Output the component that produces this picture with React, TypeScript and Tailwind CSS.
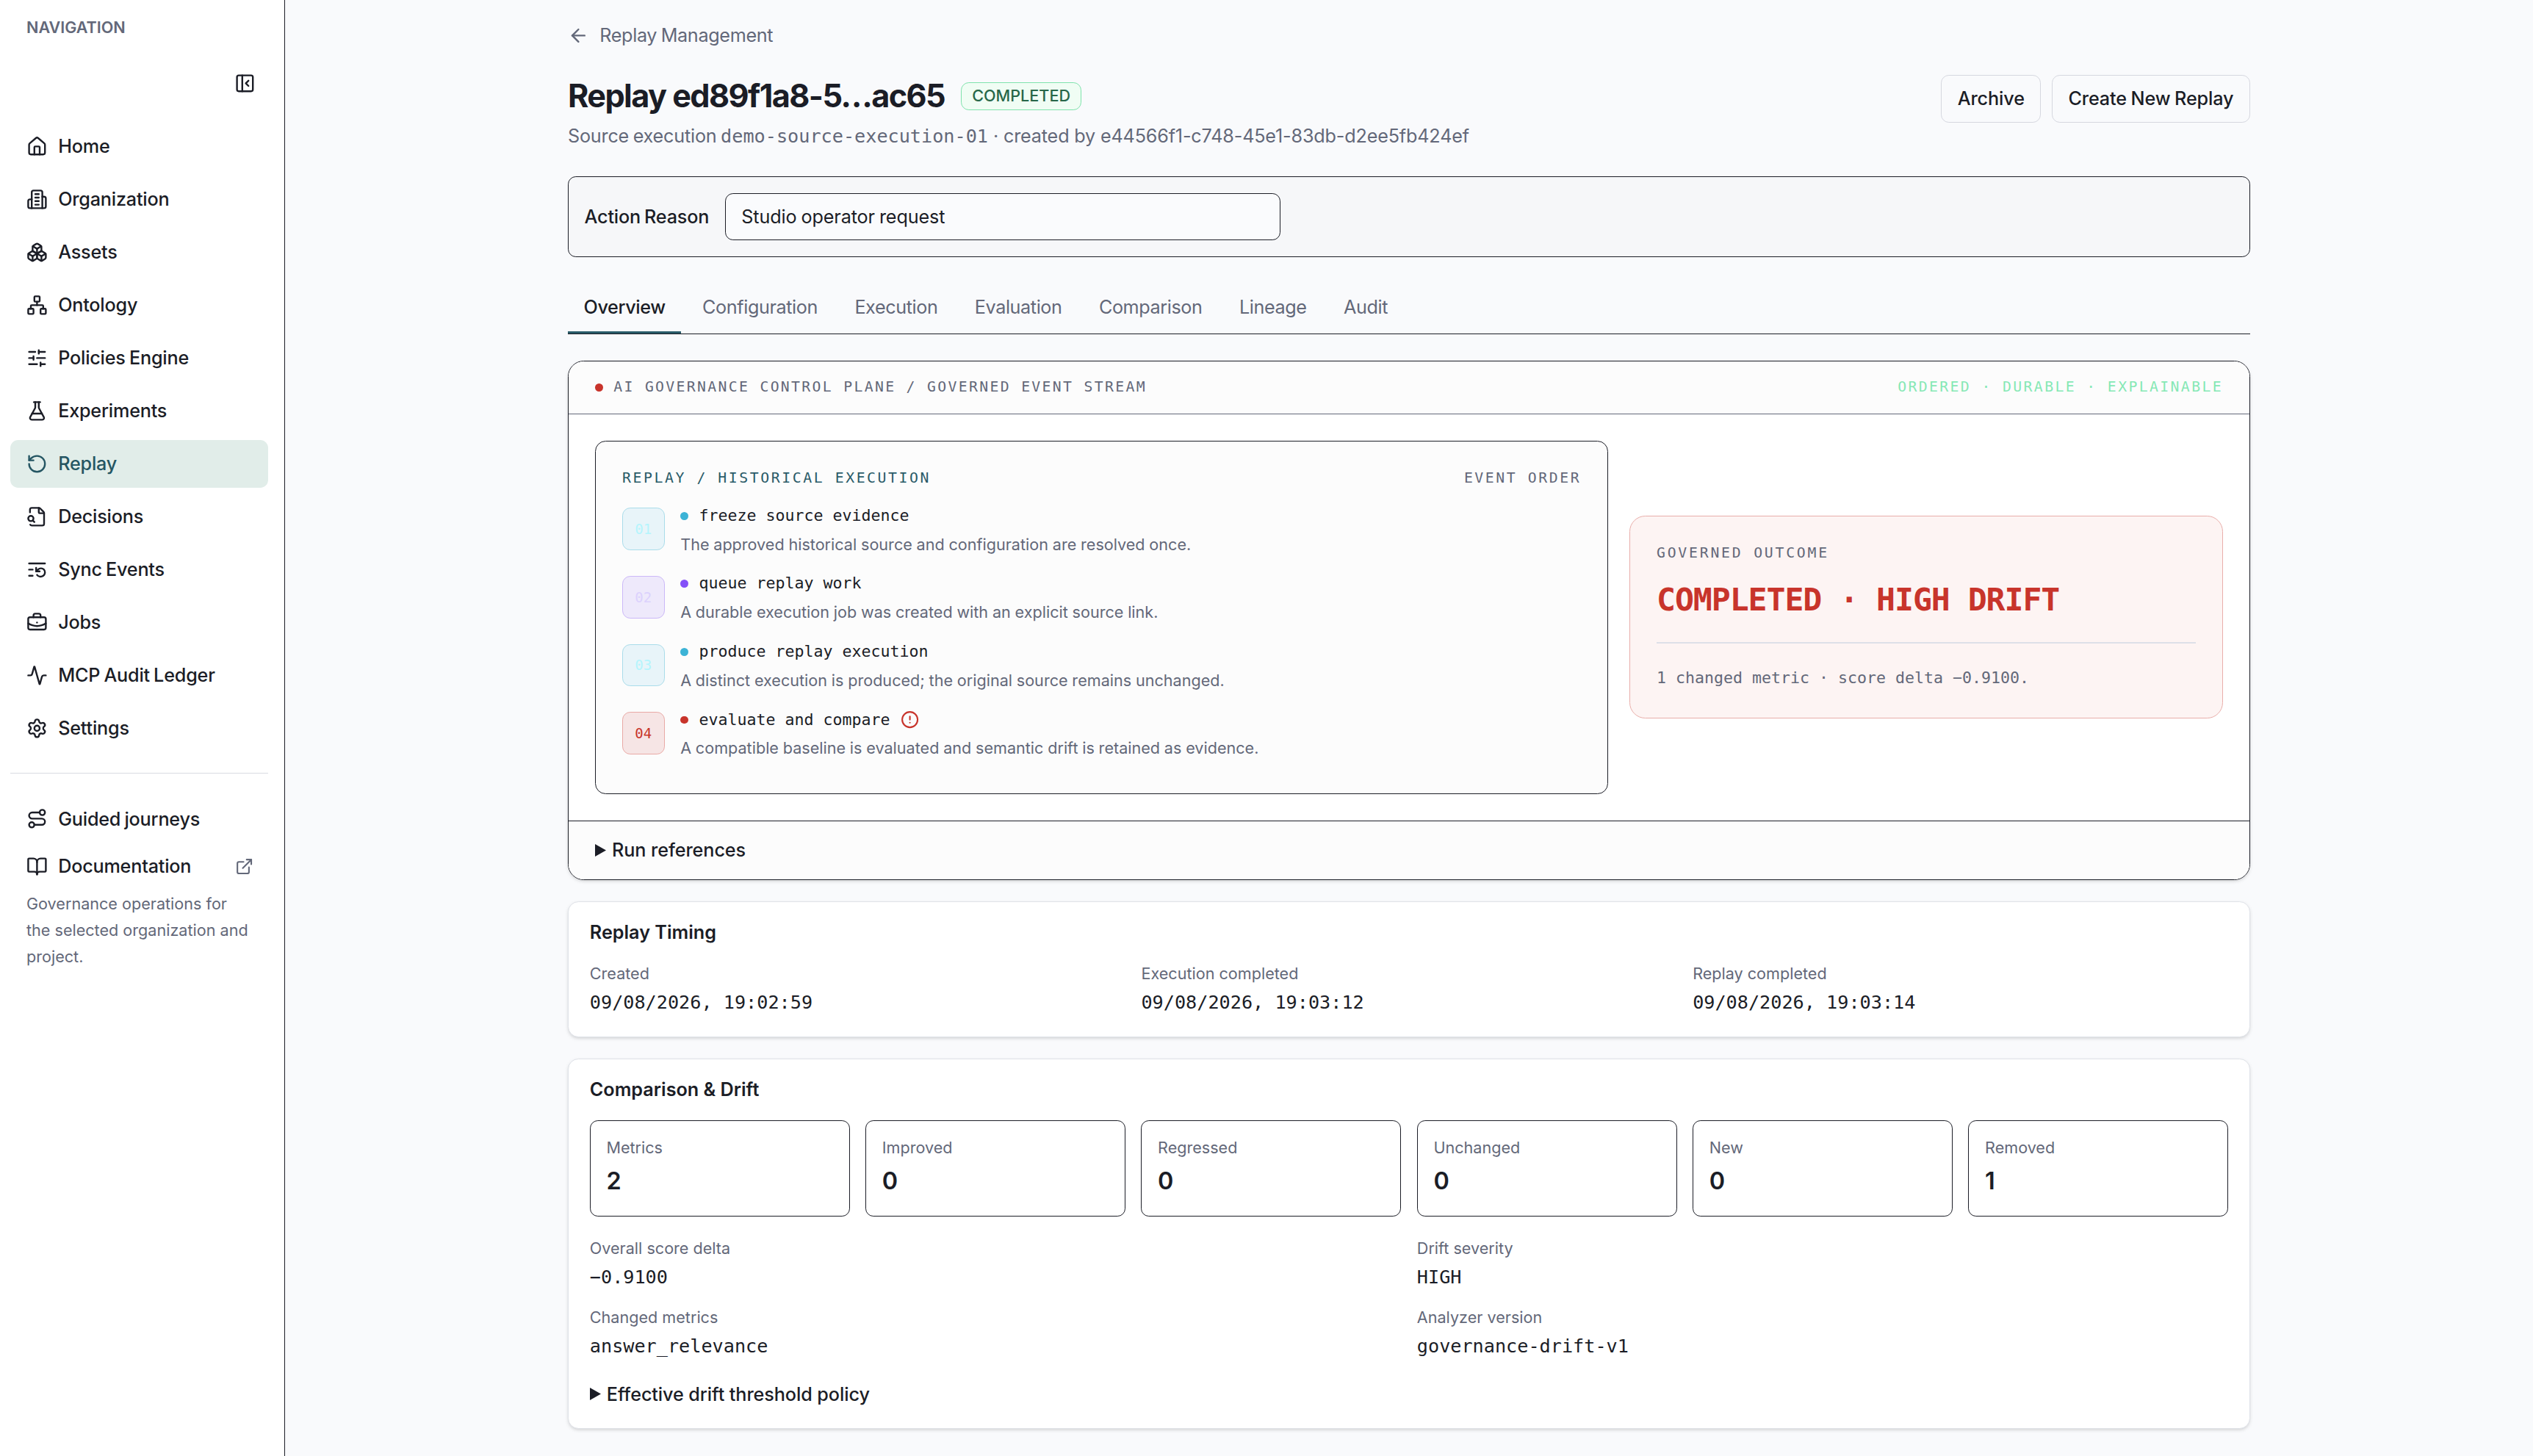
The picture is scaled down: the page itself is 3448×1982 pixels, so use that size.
import {
  Activity,
  ArrowLeft,
  BookOpen,
  Boxes,
  BriefcaseBusiness,
  CircleAlert,
  ExternalLink,
  FlaskConical,
  House,
  ListRestart,
  Network,
  PanelLeftClose,
  RotateCcw,
  Route,
  Settings,
  SlidersHorizontal,
} from "lucide-react"
import clsx from "clsx"
import type { ComponentType, ReactNode } from "react"

type IconProps = { className?: string }

const BuildingIcon = ({ className }: IconProps) => (
  <svg
    viewBox="0 0 24 24"
    fill="none"
    stroke="currentColor"
    strokeWidth="2"
    strokeLinecap="round"
    strokeLinejoin="round"
    className={className}
  >
    <path d="M6 22V4a2 2 0 0 1 2-2h8a2 2 0 0 1 2 2v18Z" />
    <path d="M6 12H4a2 2 0 0 0-2 2v6a2 2 0 0 0 2 2h2" />
    <path d="M18 9h2a2 2 0 0 1 2 2v9a2 2 0 0 1-2 2h-2" />
    <path d="M10 6h4M10 10h4M10 14h4M10 18h4" />
  </svg>
)

const FileSearchIcon = ({ className }: IconProps) => (
  <svg
    viewBox="0 0 24 24"
    fill="none"
    stroke="currentColor"
    strokeWidth="2"
    strokeLinecap="round"
    strokeLinejoin="round"
    className={className}
  >
    <path d="M14 2v5a1 1 0 0 0 1 1h5" />
    <path d="M4.268 21a2 2 0 0 0 1.727 1H18a2 2 0 0 0 2-2V8a2.4 2.4 0 0 0-.706-1.706l-3.588-3.588A2.4 2.4 0 0 0 14 2H6a2 2 0 0 0-2 2v3" />
    <path d="m9 18-1.5-1.5" />
    <circle cx="5" cy="14" r="3" />
  </svg>
)

const textSm = "text-sm tracking-[-0.2px] [word-spacing:-1.3px]"

const navItems: { label: string; icon: ComponentType<IconProps> }[] = [
  { label: "Home", icon: House },
  { label: "Organization", icon: BuildingIcon },
  { label: "Assets", icon: Boxes },
  { label: "Ontology", icon: Network },
  { label: "Policies Engine", icon: SlidersHorizontal },
  { label: "Experiments", icon: FlaskConical },
  { label: "Replay", icon: RotateCcw },
  { label: "Decisions", icon: FileSearchIcon },
  { label: "Sync Events", icon: ListRestart },
  { label: "Jobs", icon: BriefcaseBusiness },
  { label: "MCP Audit Ledger", icon: Activity },
  { label: "Settings", icon: Settings },
]

const tabs = [
  "Overview",
  "Configuration",
  "Execution",
  "Evaluation",
  "Comparison",
  "Lineage",
  "Audit",
]

const tones = {
  cyan: {
    box: "border-[#a9dcea] bg-[#e8f4f9] text-[#b5f5fd]",
    dot: "bg-[#3cb3d6]",
  },
  violet: {
    box: "border-[#cbb8f8] bg-[#eee9fb] text-[#dcd2fd]",
    dot: "bg-[#8450f8]",
  },
  red: {
    box: "border-[#e9a9a5] bg-[#f6e5e5] text-[#c8342b]",
    dot: "bg-[#c8342b]",
  },
}

const steps: { tone: keyof typeof tones; title: string; text: string; alert?: boolean }[] = [
  {
    tone: "cyan",
    title: "freeze source evidence",
    text: "The approved historical source and configuration are resolved once.",
  },
  {
    tone: "violet",
    title: "queue replay work",
    text: "A durable execution job was created with an explicit source link.",
  },
  {
    tone: "cyan",
    title: "produce replay execution",
    text: "A distinct execution is produced; the original source remains unchanged.",
  },
  {
    tone: "red",
    title: "evaluate and compare",
    text: "A compatible baseline is evaluated and semantic drift is retained as evidence.",
    alert: true,
  },
]

const timing = [
  { label: "Created", value: "09/08/2026, 19:02:59" },
  { label: "Execution completed", value: "09/08/2026, 19:03:12" },
  { label: "Replay completed", value: "09/08/2026, 19:03:14" },
]

const metrics = [
  { label: "Metrics", value: 2 },
  { label: "Improved", value: 0 },
  { label: "Regressed", value: 0 },
  { label: "Unchanged", value: 0 },
  { label: "New", value: 0 },
  { label: "Removed", value: 1 },
]

const drift = [
  { label: "Overall score delta", value: "−0.9100" },
  { label: "Drift severity", value: "HIGH" },
  { label: "Changed metrics", value: "answer_relevance" },
  { label: "Analyzer version", value: "governance-drift-v1" },
]

const Sidebar = () => (
  <aside className="flex w-[388px] shrink-0 flex-col border-r border-[#1b1d26] bg-white pr-[22px] pl-2">
    <div className="flex h-[74px] items-center px-3 text-xs font-semibold text-[#636879]">
      NAVIGATION
    </div>
    <div className="flex h-[79px] items-center justify-end pr-[17px]">
      <PanelLeftClose className="size-4" />
    </div>
    <nav className="mt-[14px] flex flex-col gap-1">
      {navItems.map(({ label, icon: Icon }) => (
        <a
          key={label}
          className={clsx(
            textSm,
            "flex h-9 items-center gap-2 rounded-md px-3 font-medium",
            label === "Replay" && "bg-[#e1ede9] text-[#255663]"
          )}
        >
          <Icon className="size-4" />
          {label}
        </a>
      ))}
    </nav>
    <div className="my-4 border-t border-[#d9dbe1]" />
    <a className={clsx(textSm, "flex h-9 items-center gap-2 px-3 font-medium")}>
      <Route className="size-4" />
      Guided journeys
    </a>
    <a className={clsx(textSm, "flex h-9 items-center gap-2 pr-[20px] pl-3 font-medium")}>
      <BookOpen className="size-4" />
      Documentation
      <ExternalLink className="ml-auto size-3.5 text-[#636879]" />
    </a>
    <p className="px-3 text-xs leading-5 text-[#636879]">
      Governance operations for the selected organization and project.
    </p>
  </aside>
)

const Button = ({ children }: { children: ReactNode }) => (
  <button className="h-9 rounded-md border border-[#d5d7df] px-3 text-sm font-medium tracking-[-0.12px] [word-spacing:-1px]">
    {children}
  </button>
)

const Summary = ({ children }: { children: ReactNode }) => (
  <summary className="flex items-center gap-[8px] text-sm font-medium tracking-[-0.08px]">
    <svg viewBox="0 0 15 17" fill="currentColor" className="h-[17px] w-[15px]">
      <path d="M0 0 15 8.5 0 17Z" />
    </svg>
    {children}
  </summary>
)

const Card = ({ title, children }: { title: string; children: ReactNode }) => (
  <section className="mt-4 rounded-lg border border-[#dfe2e8] bg-white p-4 shadow-[0_2px_5px_rgb(0_0_0/0.1),0_2px_4px_-2px_rgb(0_0_0/0.1)]">
    <h2 className="text-sm leading-none font-semibold">{title}</h2>
    {children}
  </section>
)

const Field = ({ label, value }: { label: string; value: string }) => (
  <div>
    <div className="text-xs text-[#636879]">{label}</div>
    <div className="mt-1 font-mono text-sm">{value}</div>
  </div>
)

const EventStream = () => (
  <section className="mt-5 overflow-hidden rounded-xl border border-[#1b1d26] bg-white shadow-[0_2px_5px_rgb(0_0_0/0.1),0_2px_4px_-2px_rgb(0_0_0/0.1)]">
    <div className="flex h-10 items-center justify-between border-b border-[#636879] bg-[#fcfcfc] px-5 font-mono text-[19.8px]">
      <div className="flex items-center gap-2 tracking-[2.32px] text-[#636879]">
        <span className="size-1.5 rounded-full bg-[#c8342b]" />
        AI GOVERNANCE CONTROL PLANE / GOVERNED EVENT STREAM
      </div>
      <span className="tracking-[0.12em] text-[#86e8b5]">ORDERED · DURABLE · EXPLAINABLE</span>
    </div>

    <div className="flex items-center gap-4 p-5">
      <div className="h-[481px] flex-1 rounded-lg border border-[#1b1d26] bg-[#fcfcfc] p-5">
        <div className="flex h-[29px] items-center justify-between font-mono text-[19.8px] tracking-[0.13em]">
          <span className="text-[#2a5b68]">REPLAY / HISTORICAL EXECUTION</span>
          <span className="text-[#636879]">EVENT ORDER</span>
        </div>
        <ol className="mt-[22px] flex flex-col">
          {steps.map(({ tone, title, text, alert }, i) => (
            <li key={title} className="flex h-[92.6px] gap-3">
              <span
                className={clsx(
                  "mt-0.5 flex size-8 shrink-0 items-center justify-center rounded-md border font-mono text-[19px]",
                  tones[tone].box
                )}
              >
                0{i + 1}
              </span>
              <div>
                <div className="flex h-4 items-center gap-2 font-mono text-xs">
                  <span className={clsx("size-1.5 rounded-full", tones[tone].dot)} />
                  {title}
                  {alert && <CircleAlert className="size-3.5 text-[#c8342b]" />}
                </div>
                <p className="mt-[6px] text-xs leading-5 text-[#636879] [word-spacing:-0.3px]">
                  {text}
                </p>
              </div>
            </li>
          ))}
        </ol>
      </div>

      <div className="w-[808px] rounded-xl border border-[#e9aeaa] bg-[#fdf4f3] p-5 font-mono">
        <div className="text-[19.8px] leading-[27px] tracking-[0.14em] text-[#636879]">
          GOVERNED OUTCOME
        </div>
        <div className="mt-3 text-2xl font-bold tracking-tight text-[#c8342b]">
          COMPLETED · HIGH DRIFT
        </div>
        <div className="my-4 h-[2px] bg-[#dde0e8]" />
        <p className="text-xs leading-5 text-[#636879]">
          1 changed metric · score delta −0.9100.
        </p>
      </div>
    </div>

    <details className="border-t border-[#1b1d26] bg-[#fcfcfc] px-5 py-3">
      <Summary>Run references</Summary>
    </details>
  </section>
)

const App = () => {
  return (
    <div
      className="flex h-screen overflow-hidden bg-[#f9fafc] font-sans text-[#1b1d26]
        [--font-mono:'DejaVu_Sans_Mono',monospace] [--font-sans:Inter,sans-serif]
        [--radius-lg:14.4px] [--radius-md:10.8px] [--radius-xl:21.6px] [--spacing:7.2px]
        [--text-2xl:43.2px] [--text-lg:32.4px] [--text-sm:25.2px] [--text-xs:21.6px]"
    >
      <Sidebar />
      <main className="flex-1 pt-[30px]">
        <div className="mx-auto w-[2290px]">
          <a className="flex items-center gap-2 text-sm tracking-[-0.33px] text-[#636879] [word-spacing:-1.3px]">
            <ArrowLeft className="size-4" />
            Replay Management
          </a>

          <header className="mt-5 flex h-[102px] items-start justify-between">
            <div>
              <div className="flex items-center gap-3">
                <h1 className="text-2xl font-bold tracking-[-0.036em]">
                  Replay ed89f1a8-5…ac65
                </h1>
                <span className="flex h-[38px] items-center rounded-md border border-[#7fe3ac] bg-[#f0fdf4] px-2 text-xs font-medium text-[#276749]">
                  COMPLETED
                </span>
              </div>
              <p className={clsx(textSm, "mt-1 text-[#636879]")}>
                Source execution{" "}
                <span className="font-mono tracking-normal">demo-source-execution-01</span>
                <span className="tracking-[-0.17px] [word-spacing:0px]">
                  {" "}
                  · created by e44566f1-c748-45e1-83db-d2ee5fb424ef
                </span>
              </p>
            </div>
            <div className="flex gap-2">
              <Button>Archive</Button>
              <Button>Create New Replay</Button>
            </div>
          </header>

          <div className="mt-5 flex items-center gap-3 rounded-md border border-[#1b1d26] bg-[#f6f7f9] p-3">
            <label className={clsx(textSm, "font-medium")}>Action Reason</label>
            <input
              defaultValue="Studio operator request"
              className="h-9 w-[756px] rounded-md border border-[#1b1d26] bg-[#fafbfd] px-3 text-sm tracking-[-0.12px] [word-spacing:-1px]"
            />
          </div>

          <div className="mt-5 flex gap-1 border-b border-[#1b1d26]">
            {tabs.map((tab, i) => (
              <button
                key={tab}
                className={clsx(
                  "border-b-3 px-3 py-2 text-sm tracking-[-0.4px]",
                  i === 0
                    ? "border-[#2a5b68] font-medium"
                    : "border-transparent text-[#636879]"
                )}
              >
                {tab}
              </button>
            ))}
          </div>

          <EventStream />

          <Card title="Replay Timing">
            <div className="mt-4 grid grid-cols-3 gap-3">
              {timing.map((item) => (
                <Field key={item.label} {...item} />
              ))}
            </div>
          </Card>

          <Card title="Comparison & Drift">
            <div className="mt-4 grid grid-cols-6 gap-3">
              {metrics.map(({ label, value }) => (
                <div key={label} className="rounded-md border border-[#1b1d26] p-3">
                  <div className="text-xs text-[#636879]">{label}</div>
                  <div className="mt-1 text-lg font-semibold">{value}</div>
                </div>
              ))}
            </div>
            <div className="mt-4 grid grid-cols-2 gap-3">
              {drift.map((item) => (
                <Field key={item.label} {...item} />
              ))}
            </div>
            <details className="mt-4">
              <Summary>Effective drift threshold policy</Summary>
            </details>
          </Card>
        </div>
      </main>
    </div>
  )
}

export default App
